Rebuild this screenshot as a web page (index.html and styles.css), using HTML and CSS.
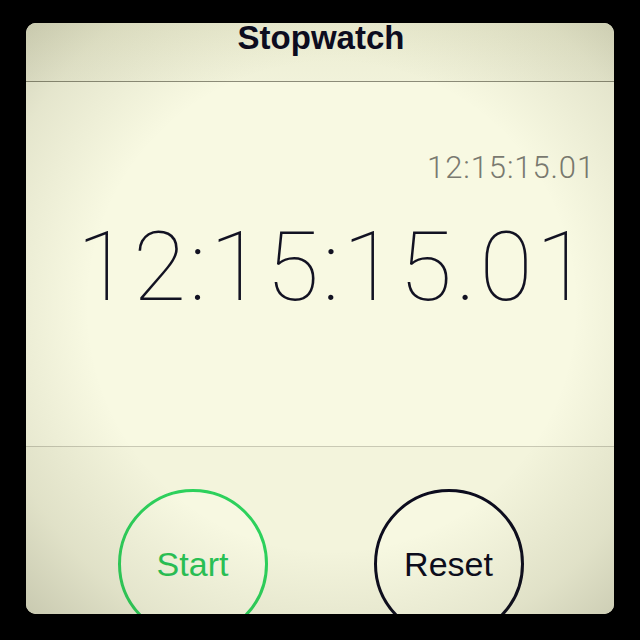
FILE: index.html
```html
<!DOCTYPE html>
<html>
<head>
<meta charset="utf-8">
<link rel="stylesheet" href="styles.css">
</head>
<body>
<div class="frame">
  <div class="screen">
    <header class="bar"><h1 class="title">Stopwatch</h1></header>
    <main class="display">
      <div class="lap">12:15:15.01</div>
      <div class="time">12:15:15.01</div>
    </main>
    <section class="controls">
      <button class="btn start">Start</button>
      <button class="btn reset">Reset</button>
    </section>
    <div class="vignette"></div>
  </div>
</div>
</body>
</html>
```
FILE: styles.css
```css
html, body { margin: 0; padding: 0; background: #000; }
.frame { width: 640px; height: 640px; box-sizing: border-box; padding: 23px 26px 26px 26px; }
.screen {
  position: relative;
  width: 588px; height: 591px;
  border-radius: 10px;
  background: #f8f9e2;
  display: flex; flex-direction: column;
  font-family: "Liberation Sans", Arial, sans-serif;
}
.bar {
  flex: none;
  height: 59px; box-sizing: border-box;
  border-radius: 10px 10px 0 0;
  border-bottom: 1px solid #8c8c78;
  background: linear-gradient(180deg, #ecedd2, #f1f2da);
  display: flex; justify-content: center; align-items: flex-start;
}
.title { margin: 0; padding-left: 2px; font-size: 33px; line-height: 29px; font-weight: 700; color: #0b0b1f; }
.display {
  flex: none;
  height: 365px; box-sizing: border-box;
  border-bottom: 1px solid #c9c9b4;
  display: flex; flex-direction: column; align-items: flex-end;
  padding: 68px 20px 0 0;
}
.lap { font-family: Roboto, "Liberation Sans", sans-serif; font-weight: 300; font-size: 31px; line-height: 36px; color: #7a7a70; letter-spacing: 0.9px; margin-right: -1px; }
.time { font-family: Roboto, "Liberation Sans", sans-serif; font-weight: 100; font-size: 97px; line-height: 110px; color: #121222; margin-top: 26px; margin-right: 2px; letter-spacing: 3.2px; }
.controls {
  flex: 1; min-height: 0;
  overflow: hidden;
  border-radius: 0 0 10px 10px;
  display: flex; justify-content: center; align-items: flex-start; gap: 106px;
  padding-top: 42px; padding-left: 1px;
  background: #f3f4dc;
}
.btn {
  flex: none;
  width: 150px; height: 150px; border-radius: 50%;
  background: #f7f8e1;
  font-family: "Liberation Sans", Arial, sans-serif;
  font-size: 34px; padding: 0;
}
.start { border: 3px solid #2dd15c; color: #28c456; }
.reset { border: 3px solid #0c0c1e; color: #0b0b1c; }
.vignette {
  position: absolute; inset: 0; pointer-events: none;
  border-radius: 10px;
  background: radial-gradient(ellipse 75% 75% at 52% 48%, rgba(0,0,0,0) 55%, rgba(60,60,20,0.10) 80%, rgba(40,40,10,0.22) 100%);
}
```
